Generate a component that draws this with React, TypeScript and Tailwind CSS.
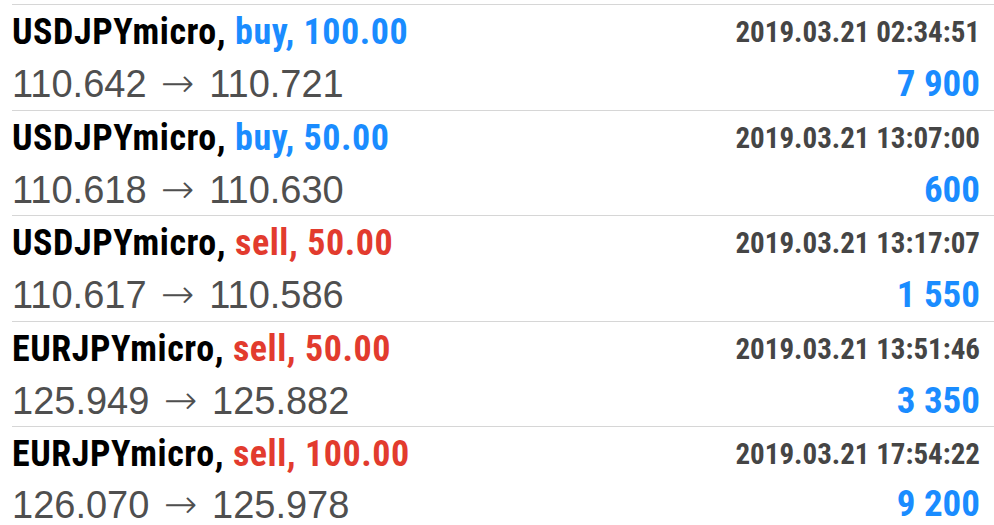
import React from 'react';

type Deal = {
  symbol: string;
  side: 'buy' | 'sell';
  volume: string;
  time: string;
  open: string;
  close: string;
  profit: string;
  h: string;
};

const deals: Deal[] = [
  { symbol: 'USDJPYmicro', side: 'buy', volume: '100.00', time: '2019.03.21 02:34:51', open: '110.642', close: '110.721', profit: '7 900', h: 'h-[106px]' },
  { symbol: 'USDJPYmicro', side: 'buy', volume: '50.00', time: '2019.03.21 13:07:00', open: '110.618', close: '110.630', profit: '600', h: 'h-[105px]' },
  { symbol: 'USDJPYmicro', side: 'sell', volume: '50.00', time: '2019.03.21 13:17:07', open: '110.617', close: '110.586', profit: '1 550', h: 'h-[106px]' },
  { symbol: 'EURJPYmicro', side: 'sell', volume: '50.00', time: '2019.03.21 13:51:46', open: '125.949', close: '125.882', profit: '3 350', h: 'h-[105px]' },
  { symbol: 'EURJPYmicro', side: 'sell', volume: '100.00', time: '2019.03.21 17:54:22', open: '126.070', close: '125.978', profit: '9 200', h: 'h-[98px]' },
];

const narrow = { fontFamily: 'Roboto, "Liberation Sans", sans-serif' };
const regular = { fontFamily: '"Liberation Sans", Arial, sans-serif' };
const arrow = { fontFamily: '"DejaVu Sans", sans-serif' };

function DealRow({ d, last }: { d: Deal; last: boolean }) {
  return (
    <div className={`${d.h} ${last ? '' : 'border-b border-[#d6d6d6]'} pr-[14px] flex flex-col`}>
      <div className="flex justify-between items-center h-[50px] pt-[4px] shrink-0">
        <div className="text-[36px] leading-none font-bold text-black font-stretch-[80%] tracking-[0.55px]" style={narrow}>
          {d.symbol},{' '}
          <span className={d.side === 'buy' ? 'text-[#1a8cff]' : 'text-[#e23b2e]'}>
            {d.side}, {d.volume}
          </span>
        </div>
        <div className="text-[29px] leading-none font-bold text-[#454545] font-stretch-[80%]" style={narrow}>
          {d.time}
        </div>
      </div>
      <div className={`flex justify-between items-center h-[48px] shrink-0 ${last ? 'pt-[5px]' : 'pt-[8px]'}`}>
        <div className="text-[38px] leading-none text-[#4f4f4f]" style={regular}>
          {d.open} <span style={arrow} className="text-[40px] leading-none font-extralight mx-[4px]">→</span> {d.close}
        </div>
        <div className="text-[37px] leading-none font-bold text-[#1a8cff] font-stretch-[80%]" style={narrow}>
          {d.profit}
        </div>
      </div>
    </div>
  );
}

export default function App() {
  return (
    <div className="w-[994px] h-[525px] bg-white overflow-hidden pt-[4px]">
      <div className="ml-[12px] border-t border-[#d6d6d6]">
        {deals.map((d, i) => (
          <DealRow key={i} d={d} last={i === deals.length - 1} />
        ))}
      </div>
    </div>
  );
}
